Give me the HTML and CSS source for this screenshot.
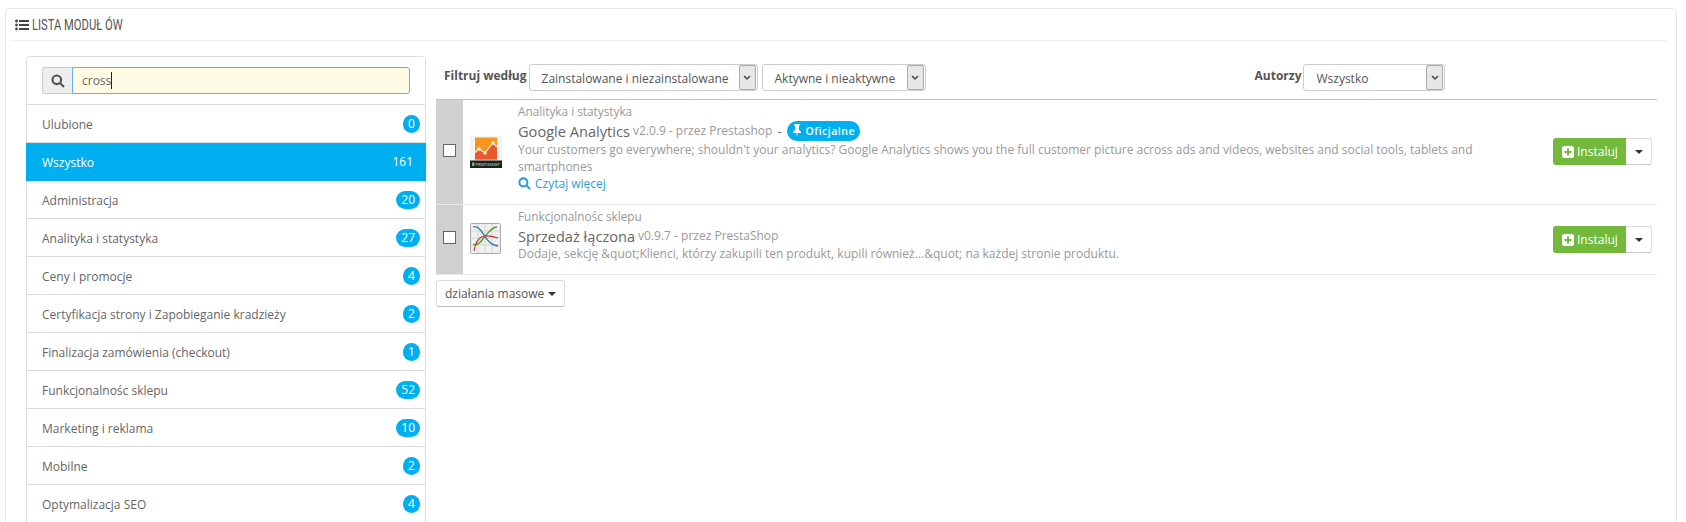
FILE: index.html
```html
<!DOCTYPE html>
<html lang="pl">
<head>
<meta charset="utf-8">
<title>Lista modułów</title>
<link rel="stylesheet" href="styles.css">
</head>
<body>
<section class="panel">
  <h3 class="panel-head">
    <svg class="head-icon" viewBox="0 0 14 12"><circle cx="1.5" cy="2" r="1.4"/><circle cx="1.5" cy="6" r="1.4"/><circle cx="1.5" cy="10" r="1.4"/><rect x="4" y="1" width="10" height="2"/><rect x="4" y="5" width="10" height="2"/><rect x="4" y="9" width="10" height="2"/></svg>
    <span class="head-text">LISTA MODUŁ ÓW</span>
  </h3>
  <div class="columns">
    <aside class="side">
      <div class="search">
        <span class="addon"><svg class="search-icon" viewBox="0 0 14 14"><circle cx="5.8" cy="5.8" r="4.3"/><line x1="9" y1="9" x2="13" y2="13"/></svg></span>
        <div class="search-input"><span>cross</span><i class="caret"></i></div>
      </div>
      <ul class="cats">
        <li><span>Ulubione</span><b class="badge">0</b></li>
        <li class="active"><span>Wszystko</span><b class="badge">161</b></li>
        <li><span>Administracja</span><b class="badge">20</b></li>
        <li><span>Analityka i statystyka</span><b class="badge">27</b></li>
        <li><span>Ceny i promocje</span><b class="badge">4</b></li>
        <li><span>Certyfikacja strony i Zapobieganie kradzieży</span><b class="badge">2</b></li>
        <li><span>Finalizacja zamówienia (checkout)</span><b class="badge">1</b></li>
        <li><span>Funkcjonalnośc sklepu</span><b class="badge">52</b></li>
        <li><span>Marketing i reklama</span><b class="badge">10</b></li>
        <li><span>Mobilne</span><b class="badge">2</b></li>
        <li><span>Optymalizacja SEO</span><b class="badge">4</b></li>
      </ul>
    </aside>
    <main class="content">
      <div class="filters">
        <label class="flabel">Filtruj według</label>
        <div class="sel sel-a"><span>Zainstalowane i niezainstalowane</span><i class="sel-btn"><svg viewBox="0 0 8 6"><path d="M1 1l3 3 3-3"/></svg></i></div>
        <div class="sel sel-b"><span>Aktywne i nieaktywne</span><i class="sel-btn"><svg viewBox="0 0 8 6"><path d="M1 1l3 3 3-3"/></svg></i></div>
        <label class="flabel flabel-auth">Autorzy</label>
        <div class="sel sel-c"><span>Wszystko</span><i class="sel-btn"><svg viewBox="0 0 8 6"><path d="M1 1l3 3 3-3"/></svg></i></div>
      </div>
      <div class="mod mod-one">
        <div class="mod-check"><i class="box"></i></div>
        <div class="mod-img">
          <svg class="ga" viewBox="0 0 32 32">
            <rect width="32" height="25" fill="#f3f3f1"/>
            <rect x="5" y="1.500" width="22" height="22" fill="#f79420"/>
            <path d="M5 23.500V16.500L9 13l6 4 8-10 4 4v12.500z" fill="#e9572a"/>
            <path d="M5 16.500L9 13l6 4 8-10 4 4" fill="none" stroke="#f8e8d4" stroke-width="1.200"/>
            <circle cx="9" cy="13" r="1.800" fill="#f8e8d4"/><circle cx="15" cy="17" r="1.800" fill="#f8e8d4"/><circle cx="23" cy="7" r="1.800" fill="#f8e8d4"/>
            <rect y="24.500" width="32" height="7.500" fill="#1c211c"/>
            <rect x="2" y="26.500" width="2.500" height="3.500" fill="#8fae6a"/>
            <text class="ga-text" x="5.500" y="30">PRESTASHOP</text>
          </svg>
        </div>
        <div class="mod-info">
          <div class="mod-cat">Analityka i statystyka</div>
          <div class="mod-title"><span class="mod-name">Google Analytics</span> <small>v2.0.9 - przez Prestashop</small> <span class="dash">-</span> <span class="official"><svg viewBox="0 0 10 13"><path d="M2 0h6v1L7 2v4l2 2v1H5.600L5 13l-.6-4H1V8l2-2V2L2 1z"/></svg>Oficjalne</span></div>
          <p class="mod-desc">Your customers go everywhere; shouldn't your analytics? Google Analytics shows you the full customer picture across ads and videos, websites and social tools, tablets and smartphones</p>
          <a class="more"><svg class="more-icon" viewBox="0 0 14 14"><circle cx="5.8" cy="5.8" r="4.3"/><line x1="9" y1="9" x2="13" y2="13"/></svg>Czytaj więcej</a>
        </div>
        <div class="mod-act">
          <div class="group"><span class="install"><svg viewBox="0 0 12 12"><rect width="12" height="12" rx="2.500" fill="#fff"/><path d="M6 2.500v7M2.500 6h7" stroke="#72b93c" stroke-width="2.200"/></svg>Instaluj</span><span class="tog"><i class="tri"></i></span></div>
        </div>
      </div>
      <div class="mod mod-two">
        <div class="mod-check"><i class="box"></i></div>
        <div class="mod-img">
          <svg class="chart" viewBox="0 0 32 32">
            <rect x=".5" y=".5" width="30" height="30" rx="1" fill="#efefed" stroke="#a9a9a9"/>
            <path d="M8 1v29M15 1v29M22 1v29M1 8h29M1 15h29M1 22h29" stroke="#d0d0d0" stroke-width=".8"/>
            <path d="M3 4c10-3 11 18 25 19" fill="none" stroke="#2f7fb8" stroke-width="1.300"/>
            <path d="M3 21c8 5 14-17 24-17" fill="none" stroke="#5b9a31" stroke-width="1.300"/>
            <path d="M4 28c3-19 14-16 24-13" fill="none" stroke="#b53f3a" stroke-width="1.300"/>
          </svg>
        </div>
        <div class="mod-info">
          <div class="mod-cat">Funkcjonalnośc sklepu</div>
          <div class="mod-title"><span class="mod-name">Sprzedaż łączona</span> <small>v0.9.7 - przez PrestaShop</small></div>
          <p class="mod-desc">Dodaje, sekcję &amp;quot;Klienci, którzy zakupili ten produkt, kupili również...&amp;quot; na każdej stronie produktu.</p>
        </div>
        <div class="mod-act">
          <div class="group"><span class="install"><svg viewBox="0 0 12 12"><rect width="12" height="12" rx="2.500" fill="#fff"/><path d="M6 2.500v7M2.500 6h7" stroke="#72b93c" stroke-width="2.200"/></svg>Instaluj</span><span class="tog"><i class="tri"></i></span></div>
        </div>
      </div>
      <div class="bulk"><span class="bulk-btn">działania masowe<i class="tri"></i></span></div>
    </main>
  </div>
</section>
</body>
</html>
```
FILE: styles.css
```css
* { box-sizing: border-box; }
html, body { margin: 0; height: 522px; overflow: hidden; background: #fff; }
body { padding: 8px 9px 0 5px; font-family: "Open Sans", "Noto Sans", sans-serif; font-size: 12px; color: #666; }
.panel { height: 514px; overflow: hidden; border: 1px solid #e6e6e6; border-bottom: 0; border-radius: 5px 5px 0 0; padding: 0 0 0 4px; }
.panel-head { display: flex; align-items: center; gap: 3px; height: 32px; margin: 0 9px 0 0; padding: 0 0 0 5px; border-bottom: 1px solid #eee; font-family: "Roboto", sans-serif; font-size: 14px; font-weight: 400; color: #555; }
.head-text { display: inline-block; transform: scaleX(.8); transform-origin: left center; }
.head-icon { width: 14px; height: 12px; fill: #444; }
.columns { display: flex; padding: 15px 19px 0 16px; }
.side { flex: 0 0 400px; height: 600px; border: 1px solid #ddd; border-radius: 4px 4px 0 0; }
.search { display: flex; height: 48px; padding: 10px 15px; border-bottom: 1px solid #ddd; }
.addon { display: flex; align-items: center; justify-content: center; flex: 0 0 30px; background: #eee; border: 1px solid #ccc; border-right: 0; border-radius: 3px 0 0 3px; }
.search-icon { width: 14px; height: 14px; fill: none; stroke: #555; stroke-width: 2.200; }
.search-input { flex: 1; display: flex; align-items: center; padding-left: 9px; background: #fffbe4; border: 1px solid #66afe9; border-radius: 0 3px 3px 0; font-size: 12px; color: #666; }
.caret { width: 1px; height: 17px; background: #222; }
.cats { list-style: none; margin: 0; padding: 0; }
.cats li { display: flex; align-items: center; justify-content: space-between; height: 38px; padding: 0 5px 0 15px; border-bottom: 1px solid #ddd; font-size: 12px; color: #666; }
.cats li span { position: relative; top: 1px; }
.cats li.active { margin: 0 -1px; padding: 0 6px 0 16px; background: #00aff0; color: #fff; border-bottom-color: #00aff0; }
.badge { min-width: 17px; height: 18px; padding: 0 5px; border-radius: 9px; background: #00aff0; color: #fff; font-weight: 400; font-size: 12px; line-height: 18px; text-align: center; }
.active .badge { background: none; padding-right: 7px; }
.content { flex: 1; padding-left: 10px; }
.filters { display: flex; align-items: center; height: 44px; padding: 0 0 0 8px; border-bottom: 1px solid #a9cbdc; }
.flabel { font-weight: 700; font-size: 12px; color: #555; margin: -5px 2px 0 0; }
.flabel-auth { margin-left: 329px; }
.sel { display: flex; align-items: center; justify-content: space-between; height: 27px; padding: 0 1px 0 12px; border: 1px solid #ccc; border-radius: 3px; font-size: 12px; color: #555; background: #fff; }
.sel span { position: relative; top: 1px; }
.sel-a { width: 229px; margin-right: 4px; }
.sel-b { width: 164px; }
.sel-c { width: 142px; }
.sel-btn { display: flex; align-items: center; justify-content: center; width: 17px; height: 25px; background: #e7e7e7; border: 1px solid #aaa; border-radius: 2px; }
.sel-btn svg { width: 8px; height: 6px; fill: none; stroke: #444; stroke-width: 1.500; }
.mod { display: flex; border-bottom: 1px solid #e8e8e8; }
.mod-one { height: 105px; }
.mod-two { height: 70px; }
.mod-check { display: flex; align-items: center; justify-content: center; flex: 0 0 27px; padding-bottom: 4px; background: #d0d0d0; }
.box { width: 13px; height: 13px; background: #fff; border: 1px solid #666; }
.mod-img { display: flex; align-items: center; flex: 0 0 55px; padding-left: 7px; }
.mod-two .mod-img { padding-bottom: 2px; }
.ga { width: 32px; height: 32px; }
.ga-text { font-family: "Roboto", sans-serif; font-size: 3.800px; font-weight: 700; fill: #9aa39a; }
.chart { width: 32px; height: 32px; }
.mod-info { flex: 1; min-width: 0; padding-top: 4px; }
.mod-cat { font-size: 11.800px; line-height: 15px; color: #999; }
.mod-title { display: flex; align-items: center; gap: 3px; height: 21px; margin-top: 1px; color: #777; }
.mod-name { font-size: 14.600px; color: #666; }
.mod-title small { font-size: 12px; color: #999; }
.dash { margin: 0 2px; font-size: 13px; color: #666; }
.official { display: inline-flex; align-items: center; gap: 4px; height: 20px; padding: 0 5px; border-radius: 10px; background: #00aff0; color: #fff; font-size: 10.500px; font-weight: 600; letter-spacing: .5px; }
.official svg { width: 10px; height: 13px; fill: #fff; }
.mod-desc { width: 985px; margin: 0; font-size: 12px; line-height: 17px; color: #999; }
.mod-two .mod-desc { position: relative; top: -1px; }
.more { display: flex; align-items: center; gap: 4px; line-height: 17px; color: #2b9fd8; font-size: 12px; }
.more-icon { width: 13px; height: 13px; fill: none; stroke: #2b9fd8; stroke-width: 2.200; }
.mod-act { flex: 0 0 auto; padding: 38px 5px 0 0; }
.mod-two .mod-act { padding-top: 21px; }
.group { display: flex; height: 27px; }
.install { display: flex; align-items: center; gap: 3px; width: 73px; padding-left: 9px; background: #72b93c; border-radius: 3px 0 0 3px; color: #fff; font-size: 12px; }
.install svg { width: 12px; height: 12px; }
.tog { display: flex; align-items: center; justify-content: center; width: 26px; border: 1px solid #ddd; border-left: 0; border-bottom-color: #ccc; border-radius: 0 3px 3px 0; }
.tri { display: inline-block; border: 4px solid transparent; border-top-color: #333; border-bottom: 0; }
.bulk { padding-top: 5px; }
.bulk-btn { display: inline-flex; align-items: center; gap: 4px; height: 27px; padding: 0 8px; border: 1px solid #ddd; border-bottom-color: #bbb; border-radius: 3px; font-size: 12px; color: #555; }
```
